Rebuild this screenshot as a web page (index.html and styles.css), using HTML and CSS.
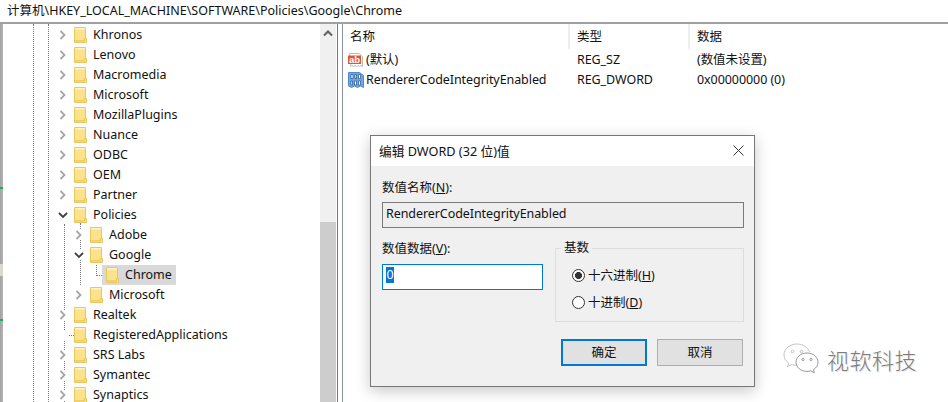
FILE: index.html
```html
<!DOCTYPE html>
<html lang="zh-CN">
<head>
<meta charset="utf-8">
<title>注册表编辑器</title>
<link rel="stylesheet" href="styles.css">
</head>
<body>
<svg class="defs" width="0" height="0" aria-hidden="true">
  <symbol id="folder" viewBox="0 0 13 16">
    <path d="M.5.5h11v13.5h-11z" fill="#fde28e" stroke="#eac75c"/>
    <path d="M1 1h10v1.500H1z" fill="#fff3c4"/>
    <path d="M10.500 11.500h2v4h-12v-1.500h10z" fill="#fce08a" stroke="#eac75c" stroke-width="1"/>
  </symbol>
  <symbol id="closed" viewBox="0 0 10 10">
    <path d="M2.500 1l4 4-4 4" fill="none" stroke="#a6a6a6" stroke-width="1.800"/>
  </symbol>
  <symbol id="open" viewBox="0 0 10 10">
    <path d="M1 3l4 4 4-4" fill="none" stroke="#404040" stroke-width="1.800"/>
  </symbol>
</svg>

<header class="address">计算机\HKEY_LOCAL_MACHINE\SOFTWARE\Policies\Google\Chrome</header>

<main class="split">
  <aside class="edge"><i class="mark"></i><i class="notch"></i><i class="mark"></i></aside>

  <section class="tree">
    <i class="guide g1"></i><i class="guide g2"></i><i class="guide g3"></i><i class="guide g4"></i><i class="guide g5"></i>
    <i class="guide-h h1"></i><i class="guide-h h2"></i>
    <ul class="rows">
      <li class="row"><svg class="arrow"><use href="#closed"/></svg><svg class="folder"><use href="#folder"/></svg><span class="label">Khronos</span></li>
      <li class="row"><svg class="arrow"><use href="#closed"/></svg><svg class="folder"><use href="#folder"/></svg><span class="label">Lenovo</span></li>
      <li class="row"><svg class="arrow"><use href="#closed"/></svg><svg class="folder"><use href="#folder"/></svg><span class="label">Macromedia</span></li>
      <li class="row"><svg class="arrow"><use href="#closed"/></svg><svg class="folder"><use href="#folder"/></svg><span class="label">Microsoft</span></li>
      <li class="row"><svg class="arrow"><use href="#closed"/></svg><svg class="folder"><use href="#folder"/></svg><span class="label">MozillaPlugins</span></li>
      <li class="row"><svg class="arrow"><use href="#closed"/></svg><svg class="folder"><use href="#folder"/></svg><span class="label">Nuance</span></li>
      <li class="row"><svg class="arrow"><use href="#closed"/></svg><svg class="folder"><use href="#folder"/></svg><span class="label">ODBC</span></li>
      <li class="row"><svg class="arrow"><use href="#closed"/></svg><svg class="folder"><use href="#folder"/></svg><span class="label">OEM</span></li>
      <li class="row"><svg class="arrow"><use href="#closed"/></svg><svg class="folder"><use href="#folder"/></svg><span class="label">Partner</span></li>
      <li class="row"><svg class="arrow"><use href="#open"/></svg><svg class="folder"><use href="#folder"/></svg><span class="label">Policies</span></li>
      <li class="row lv1"><svg class="arrow"><use href="#closed"/></svg><svg class="folder"><use href="#folder"/></svg><span class="label">Adobe</span></li>
      <li class="row lv1"><svg class="arrow"><use href="#open"/></svg><svg class="folder"><use href="#folder"/></svg><span class="label">Google</span></li>
      <li class="row lv2"><span class="selected"><svg class="folder"><use href="#folder"/></svg><span class="label">Chrome</span></span></li>
      <li class="row lv1"><svg class="arrow"><use href="#closed"/></svg><svg class="folder"><use href="#folder"/></svg><span class="label">Microsoft</span></li>
      <li class="row"><svg class="arrow"><use href="#closed"/></svg><svg class="folder"><use href="#folder"/></svg><span class="label">Realtek</span></li>
      <li class="row"><span class="arrow"></span><svg class="folder"><use href="#folder"/></svg><span class="label">RegisteredApplications</span></li>
      <li class="row"><svg class="arrow"><use href="#closed"/></svg><svg class="folder"><use href="#folder"/></svg><span class="label">SRS Labs</span></li>
      <li class="row"><svg class="arrow"><use href="#closed"/></svg><svg class="folder"><use href="#folder"/></svg><span class="label">Symantec</span></li>
      <li class="row"><svg class="arrow"><use href="#closed"/></svg><svg class="folder"><use href="#folder"/></svg><span class="label">Synaptics</span></li>
    </ul>
  </section>

  <div class="scrollbar">
    <div class="track"><svg class="up" viewBox="0 0 10 8"><path d="M1 6.500l4-4 4 4" fill="none" stroke="#606060" stroke-width="2"/></svg></div>
    <div class="thumb"></div>
  </div>

  <div class="divider"></div>

  <section class="values">
    <div class="vhead">
      <span class="cname">名称</span><span class="ctype">类型</span><span class="cdata">数据</span>
    </div>
    <div class="vrow">
      <span class="cname">
        <svg class="vicon" viewBox="0 0 16 16">
          <path d="M1.500 1.500h9.500l3.500 3v10l-1.500-1-1.500 1-1.500-1-1.500 1-1.500-1-1.500 1-1.500-1-1 1z" fill="#fff" stroke="#b9b9b9"/>
          <path d="M0 3.500h13v8.500H0z" fill="#e2562c"/>
          <text class="ab" x="1" y="10.500">ab</text>
        </svg>
        (默认)
      </span>
      <span class="ctype">REG_SZ</span><span class="cdata">(数值未设置)</span>
    </div>
    <div class="vrow">
      <span class="cname">
        <svg class="vicon" viewBox="0 0 16 16">
          <path d="M.5.500h11l4 3v12l-3-1.500-3 1.500-3-1.500-3 1.500-3-1.500z" fill="#6ba8e4" stroke="#4a8ccc"/>
          <path d="M3 2.500h2v4H3zM7 2.500h1.500v4H7zM10.500 2.500h2v4h-2zM3 9h1.500v4H3zM6.500 9h2v4h-2zM10.500 9h2v4h-2z" fill="#fff" stroke="#123f78" stroke-width=".6"/>
        </svg>
        RendererCodeIntegrityEnabled
      </span>
      <span class="ctype">REG_DWORD</span><span class="cdata">0x00000000 (0)</span>
    </div>
  </section>
</main>

<div class="dialog">
  <div class="dtitle">
    <span>编辑 DWORD (32 位)值</span>
    <svg class="close" viewBox="0 0 11 11"><path d="M.5.500l10 10M10.500.500l-10 10" stroke="#333" stroke-width="1" fill="none"/></svg>
  </div>
  <div class="dbody">
    <label class="lbl">数值名称(<u>N</u>):</label>
    <div class="namebox">RendererCodeIntegrityEnabled</div>
    <div class="columns">
      <div class="col-left">
        <label class="lbl">数值数据(<u>V</u>):</label>
        <div class="databox"><span class="sel">0</span></div>
      </div>
      <fieldset class="radix">
        <legend>基数</legend>
        <div class="radio"><i class="dot on"></i>十六进制(<u>H</u>)</div>
        <div class="radio"><i class="dot"></i>十进制(<u>D</u>)</div>
      </fieldset>
    </div>
    <div class="buttons">
      <div class="btn primary">确定</div>
      <div class="btn">取消</div>
    </div>
  </div>
</div>

<div class="watermark">
  <svg class="wechat" viewBox="0 0 36 33">
    <path d="M14 1C6.800 1 1 5.800 1 11.800c0 3.300 1.800 6.300 4.600 8.300l-1.100 3.600 4.100-2.200c1.500.5 3.200.8 5 .8" fill="#fff" stroke="#c4c4c4"/>
    <path d="M14 1c6 0 11 3.400 12.500 8" fill="none" stroke="#c4c4c4"/>
    <circle cx="9.500" cy="8.500" r="1.300" fill="none" stroke="#c4c4c4"/>
    <circle cx="18.500" cy="8.500" r="1.300" fill="none" stroke="#c4c4c4"/>
    <path d="M24 10c-6.100 0-11 4.100-11 9.200s4.900 9.200 11 9.200c1.300 0 2.600-.2 3.800-.6l3.600 2-.9-3.200c2.700-1.700 4.500-4.300 4.500-7.400 0-5.100-4.900-9.200-11-9.200z" fill="#fff" stroke="#979797"/>
    <circle cx="20" cy="16.500" r="1.100" fill="none" stroke="#979797"/>
    <circle cx="28" cy="16.500" r="1.100" fill="none" stroke="#979797"/>
  </svg>
  <span class="wmtext">视软科技</span>
</div>
</body>
</html>
```
FILE: styles.css
```css
* { box-sizing: border-box; }
html, body { margin: 0; padding: 0; }
body {
  width: 948px;
  height: 402px;
  overflow: hidden;
  position: relative;
  background: #fff;
  color: #111;
  font: 12.5px/20px "Noto Sans", "Noto Sans CJK SC", sans-serif;
  display: flex;
  flex-direction: column;
}
.defs { position: absolute; }
ul { list-style: none; margin: 0; padding: 0; }

.address {
  height: 24px;
  flex: none;
  padding: 1px 0 0 7px;
  border-bottom: 2px solid #a0a0a0;
  font-size: 12.5px;
  line-height: 20px;
  white-space: nowrap;
}
.split { flex: 1; display: flex; min-height: 0; }

.edge {
  width: 3px;
  flex: none;
  background: linear-gradient(90deg, #a2a2a2, #b6b6b6);
  display: flex;
  flex-direction: column;
  padding-top: 163px;
}
.mark { display: block; height: 2px; background: #18b060; }
.notch { display: block; height: 12px; margin: 75px 0 43px; background: #ddd8cf; }

.tree { position: relative; width: 317px; flex: none; overflow: hidden; }
.guide { position: absolute; border-left: 1px dotted #777; }
.g1 { left: 30px; top: 0; bottom: 0; }
.g2 { left: 45px; top: 0; bottom: 0; }
.g3 { left: 61px; top: 200px; bottom: 0; }
.g4 { left: 77px; top: 199px; height: 62px; }
.g5 { left: 93px; top: 241px; height: 11px; }
.guide-h { position: absolute; border-top: 1px dotted #777; }
.h1 { left: 93px; top: 251px; width: 10px; }
.h2 { left: 62px; top: 311px; width: 9px; }

.rows { position: relative; padding-top: 1px; }
.row { height: 20px; display: flex; align-items: center; padding-left: 55px; white-space: nowrap; }
.lv1 { padding-left: 71px; }
.lv2 { padding-left: 99px; }
.label { line-height: 14px; }
.arrow { width: 10px; height: 10px; margin-right: 6px; flex: none; background: #fff; }
.folder { width: 13px; height: 16px; margin-right: 6px; flex: none; background: #fff; }
.selected { display: flex; align-items: center; height: 20px; background: #d9d9d9; padding: 0 4px; }
.selected .folder { background: transparent; }

.scrollbar { width: 16px; flex: none; display: flex; flex-direction: column; background: #f0f0f0; }
.track { height: 198px; padding: 5px 3px 0; }
.up { display: block; width: 10px; height: 8px; }
.thumb { flex: 1; background: #cdcdcd; }

.divider {
  width: 6px;
  flex: none;
  margin-left: 1px;
  background: #fff;
  border-left: 1px solid #777;
  border-right: 1px solid #8a8fa0;
}

.values { flex: 1; min-width: 0; }
.vhead, .vrow { display: flex; height: 20px; align-items: center; white-space: nowrap; }
.vrow { letter-spacing: -.07px; }
.vhead { height: 26px; padding-bottom: 1px; }
.cname { width: 227px; padding-left: 5px; display: flex; align-items: center; flex: none; }
.ctype { width: 120px; padding-left: 7px; flex: none; }
.cdata { flex: 1; padding-left: 7px; }
.vhead .cname { padding-left: 7px; border-right: 2px solid #eee; height: 100%; }
.vhead .ctype { border-right: 2px solid #eee; height: 100%; display: flex; align-items: center; }
.vhead .cdata { height: 100%; display: flex; align-items: center; }
.vicon { width: 16px; height: 16px; margin-right: 2px; flex: none; }
.ab { font: bold 9.5px "Liberation Sans", sans-serif; fill: #fff; }

.dialog {
  position: absolute;
  left: 370px;
  top: 135px;
  width: 385px;
  height: 252px;
  border: 1px solid #777;
  background: #f0f0f0;
  box-shadow: 0 4px 14px rgba(0, 0, 0, .22);
  display: flex;
  flex-direction: column;
}
.dtitle {
  height: 30px;
  flex: none;
  background: #fff;
  display: flex;
  align-items: center;
  justify-content: space-between;
  padding: 0 10px 1px 8px;
  font-size: 12.7px;
}
.close { width: 11px; height: 11px; }
.dbody { flex: 1; padding: 11px 10px 0 11px; }
.lbl { display: block; height: 20px; padding-top: 1px; }
.namebox {
  margin-top: 5px;
  height: 26px;
  width: 362px;
  border: 1px solid #7a7a7a;
  background: #eee;
  padding: 1px 3px;
  letter-spacing: -.07px;
}
.columns { display: flex; margin-top: 10px; }
.col-left { width: 173px; flex: none; }
.databox {
  margin-top: 6px;
  width: 161px;
  height: 26px;
  border: 1px solid #0078d7;
  background: #fff;
  padding: 2px 3px;
}
.sel {
  display: block;
  width: 8px;
  height: 16px;
  line-height: 16px;
  text-align: center;
  background: #0078d7;
  color: #fff;
}
.radix {
  width: 189px;
  height: 83px;
  margin: 1px 0 0;
  padding: 5px 0 0 16px;
  border: 1px solid #ddd;
  min-width: 0;
}
.radix legend { padding: 0 3px; margin-left: -11px; line-height: 18px; }
.radio { display: flex; align-items: center; height: 27px; }
.dot {
  width: 13px;
  height: 13px;
  border-radius: 50%;
  border: 1px solid #333;
  background: #fff;
  margin-right: 3px;
  flex: none;
  display: block;
}
.dot.on { background: radial-gradient(circle, #333 0 3.2px, #fff 3.8px); }
.buttons { display: flex; gap: 10px; margin: 17px 0 0 179px; }
.btn {
  width: 86px;
  height: 27px;
  background: #e1e1e1;
  border: 1px solid #adadad;
  display: flex;
  align-items: center;
  justify-content: center;
}
.primary { border: 2px solid #0078d7; }

.watermark {
  position: absolute;
  left: 783px;
  top: 343px;
  display: flex;
  align-items: center;
  gap: 8px;
}
.wechat { width: 36px; height: 33px; flex: none; }
.wmtext {
  font: 300 22px/33px "Noto Sans CJK SC", sans-serif;
  color: #7d7d7d;
  letter-spacing: .5px;
  text-shadow: 1px 1px 0 #e4e4e4;
}
```
